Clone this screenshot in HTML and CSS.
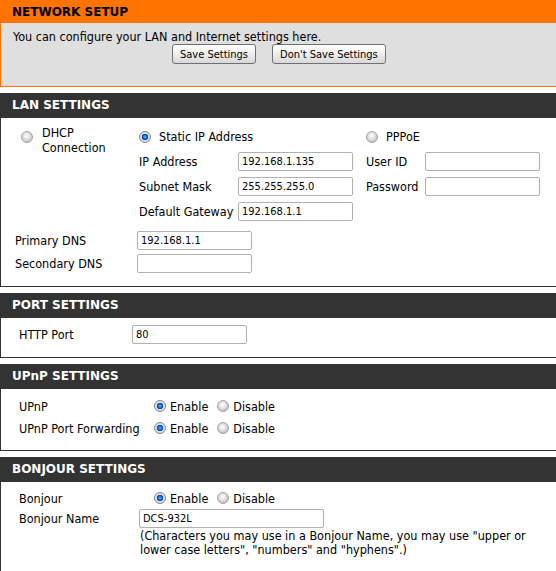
FILE: index.html
```html
<!DOCTYPE html>
<html lang="en">
<head>
  <meta charset="UTF-8">
  <meta name="viewport" content="width=device-width, initial-scale=1.0">
  <title>Network Setup</title>
  <link rel="stylesheet" href="styles.css">
</head>
<body>
  <div class="page">

    <div class="section">
      <div class="section-title orange">NETWORK SETUP</div>
      <div class="section-body intro">
        <p>You can configure your LAN and Internet settings here.</p>
        <div class="buttons">
          <button type="button" class="btn">Save Settings</button>
          <button type="button" class="btn">Don't Save Settings</button>
        </div>
      </div>
    </div>

    <div class="section">
      <div class="section-title">LAN SETTINGS</div>
      <div class="section-body lan">
        <div class="lan-grid">
          <label class="opt dhcp"><input type="radio" name="conn" value="dhcp"><span>DHCP<br>Connection</span></label>
          <label class="opt static"><input type="radio" name="conn" value="static" checked><span>Static IP Address</span></label>
          <label class="opt pppoe"><input type="radio" name="conn" value="pppoe"><span>PPPoE</span></label>

          <span class="lbl ip-lbl">IP Address</span>
          <input class="txt ip-val" type="text" value="192.168.1.135">
          <span class="lbl mask-lbl">Subnet Mask</span>
          <input class="txt mask-val" type="text" value="255.255.255.0">
          <span class="lbl gw-lbl">Default Gateway</span>
          <input class="txt gw-val" type="text" value="192.168.1.1">

          <span class="lbl user-lbl">User ID</span>
          <input class="txt user-val" type="text" value="">
          <span class="lbl pass-lbl">Password</span>
          <input class="txt pass-val" type="password" value="">
        </div>
        <div class="dns-grid">
          <span class="lbl">Primary DNS</span>
          <input class="txt" type="text" value="192.168.1.1">
          <span class="lbl">Secondary DNS</span>
          <input class="txt" type="text" value="">
        </div>
      </div>
    </div>

    <div class="section">
      <div class="section-title">PORT SETTINGS</div>
      <div class="section-body port">
        <span class="lbl">HTTP Port</span>
        <input class="txt" type="text" value="80">
      </div>
    </div>

    <div class="section">
      <div class="section-title">UPnP SETTINGS</div>
      <div class="section-body form-rows">
        <span class="lbl">UPnP</span>
        <div class="choice">
          <label class="opt"><input type="radio" name="upnp" checked><span>Enable</span></label>
          <label class="opt"><input type="radio" name="upnp"><span>Disable</span></label>
        </div>
        <span class="lbl">UPnP Port Forwarding</span>
        <div class="choice">
          <label class="opt"><input type="radio" name="upnpfw" checked><span>Enable</span></label>
          <label class="opt"><input type="radio" name="upnpfw"><span>Disable</span></label>
        </div>
      </div>
    </div>

    <div class="section">
      <div class="section-title">BONJOUR SETTINGS</div>
      <div class="section-body form-rows bonjour">
        <span class="lbl">Bonjour</span>
        <div class="choice">
          <label class="opt"><input type="radio" name="bonjour" checked><span>Enable</span></label>
          <label class="opt"><input type="radio" name="bonjour"><span>Disable</span></label>
        </div>
        <span class="lbl name-lbl">Bonjour Name</span>
        <div class="name-cell">
          <input class="txt wide" type="text" value="DCS-932L">
          <p class="note">(Characters you may use in a Bonjour Name, you may use "upper or lower case letters", "numbers" and "hyphens".)</p>
        </div>
      </div>
    </div>

  </div>
</body>
</html>
```

FILE: styles.css
```css
html, body {
  margin: 0;
  padding: 0;
  overflow: hidden;
  background-color: #fff;
}
body {
  font-family: "DejaVu Sans Condensed", "DejaVu Sans", sans-serif;
  font-stretch: condensed;
  font-size: 12.5px;
  color: #000;
}
.page {
  width: 600px;
}

/* section blocks */
.section {
  margin-bottom: 6px;
}
.section-title {
  height: 25px;
  line-height: 25px;
  padding-left: 12px;
  background-color: #333;
  color: #fff;
  font-family: "DejaVu Sans", Verdana, sans-serif;
  font-stretch: normal;
  font-weight: bold;
  font-size: 12px;
}
.section-title.orange {
  height: 23px;
  line-height: 24px;
  background-color: #ff7300;
  color: #000;
}
.section-body {
  background-color: #fff;
  border-left: 1px solid #333;
  border-bottom: 1px solid #333;
}

/* intro box */
.intro {
  background-color: #dfdfdf;
  border-color: #ff7300;
  height: 63px;
}
.intro p {
  margin: 0;
  padding: 6px 0 0 12px;
  line-height: 15px;
}
.buttons {
  display: flex;
  gap: 16px;
  padding: 0 0 0 171px;
}
.btn {
  height: 20px;
  padding: 0 7px;
  font-family: inherit;
  font-stretch: condensed;
  font-size: 11px;
  color: #000;
  background: linear-gradient(#ffffff, #f0f0f0 45%, #d8d8d8);
  border: 1px solid #707070;
  border-radius: 3px;
}

/* shared controls */
.lbl {
  display: flex;
  align-items: center;
  white-space: nowrap;
}
.txt {
  box-sizing: border-box;
  width: 115px;
  height: 19px;
  padding: 0 3px;
  margin: 0;
  font-family: inherit;
  font-stretch: condensed;
  font-size: 11px;
  color: #000;
  border: 1px solid #b0b0b0;
  border-radius: 2px;
  background-color: #fff;
}
.txt.wide {
  width: 185px;
}
.opt {
  display: flex;
  align-items: center;
  gap: 4px;
}
.opt input {
  appearance: none;
  -webkit-appearance: none;
  width: 12px;
  height: 12px;
  margin: 0;
  border-radius: 50%;
  border: 1px solid #a4a4a4;
  background: radial-gradient(circle at 45% 40%, #ffffff 0, #e4e4e4 3px, #c2c2c2 6px);
  flex: none;
}
.opt input:checked {
  border-color: #8a8a8a;
  background: radial-gradient(circle at 50% 50%, #6cc0ff 0, #1e7ad6 1.5px, #0b4c98 3px, #e8e8e8 3.6px, #cdcdcd 6px);
}

/* LAN */
.lan {
  height: 168px;
}
.lan-grid {
  display: grid;
  grid-template-columns: 138px 99px 128px 59px 120px;
  grid-template-rows: repeat(4, 25px);
  padding-top: 6px;
}
.lan-grid .txt {
  align-self: center;
}
.opt.dhcp {
  grid-area: 1 / 1 / 3 / 2;
  align-items: flex-start;
  gap: 9px;
  padding: 1px 0 0 20px;
  line-height: 15px;
}
.opt.dhcp input {
  margin-top: 6px;
}
.opt.static {
  grid-area: 1 / 2 / 2 / 4;
  gap: 8px;
}
.opt.pppoe {
  grid-area: 1 / 4 / 2 / 6;
  gap: 8px;
}
.ip-lbl   { grid-area: 2 / 2; }
.ip-val   { grid-area: 2 / 3; }
.mask-lbl { grid-area: 3 / 2; }
.mask-val { grid-area: 3 / 3; }
.gw-lbl   { grid-area: 4 / 2; }
.gw-val   { grid-area: 4 / 3; }
.user-lbl { grid-area: 2 / 4; }
.user-val { grid-area: 2 / 5; }
.pass-lbl { grid-area: 3 / 4; }
.pass-val { grid-area: 3 / 5; }

.dns-grid {
  display: grid;
  grid-template-columns: 122px 120px;
  grid-auto-rows: 23px;
  padding: 5px 0 0 14px;
  align-items: center;
}

/* port */
.port {
  display: grid;
  grid-template-columns: 113px 120px;
  grid-template-rows: 19px;
  align-items: center;
  height: 40px;
  padding: 7px 0 0 18px;
  box-sizing: border-box;
}

/* enable/disable rows */
.form-rows {
  display: grid;
  grid-template-columns: 120px 300px;
  grid-auto-rows: 22px;
  align-items: center;
  padding: 6px 0 11px 18px;
}
.choice {
  display: flex;
  align-items: center;
  gap: 9px;
  padding-left: 15px;
}
.choice .opt {
  gap: 4px;
}
.bonjour {
  grid-auto-rows: auto;
  align-content: start;
  align-items: start;
  row-gap: 3px;
  padding-top: 8px;
  height: 120px;
}
.bonjour .lbl,
.bonjour .choice {
  height: 16px;
}
.bonjour .name-lbl {
  height: 18px;
}
.name-cell {
  width: 400px;
}
.note {
  margin: 1px 0 0 1px;
  line-height: 14px;
}
```
